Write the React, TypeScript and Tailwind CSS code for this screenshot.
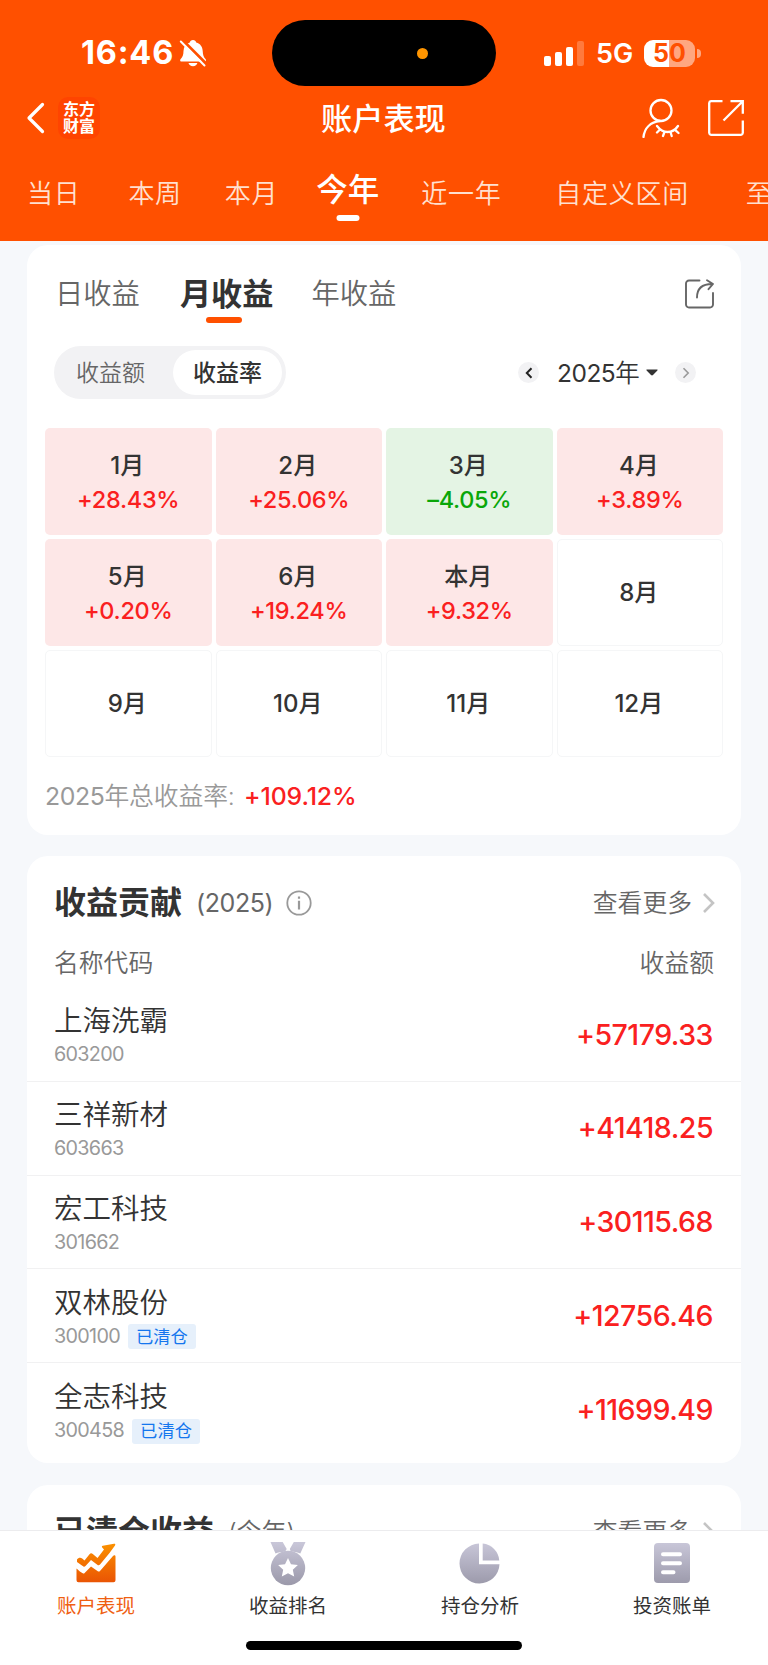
import { useState } from "react";
import clsx from "clsx";

type Month = { label: string; pct?: string };
type Stock = { name: string; code: string; amount: string; cleared?: boolean };

const RANGES = [
  { label: "当日", cls: "ml-[27px]" },
  { label: "本周", cls: "ml-[48px]" },
  { label: "本月", cls: "ml-[43px]" },
  { label: "今年", cls: "ml-[38px]" },
  { label: "近一年", cls: "ml-[42px]" },
  { label: "自定义区间", cls: "ml-[54px]" },
  { label: "至今", cls: "ml-[57px]" },
];

const MONTHS: Month[] = [
  { label: "1月", pct: "+28.43%" },
  { label: "2月", pct: "+25.06%" },
  { label: "3月", pct: "–4.05%" },
  { label: "4月", pct: "+3.89%" },
  { label: "5月", pct: "+0.20%" },
  { label: "6月", pct: "+19.24%" },
  { label: "本月", pct: "+9.32%" },
  { label: "8月" },
  { label: "9月" },
  { label: "10月" },
  { label: "11月" },
  { label: "12月" },
];

const STOCKS: Stock[] = [
  { name: "上海洗霸", code: "603200", amount: "+57179.33" },
  { name: "三祥新材", code: "603663", amount: "+41418.25" },
  { name: "宏工科技", code: "301662", amount: "+30115.68" },
  { name: "双林股份", code: "300100", amount: "+12756.46", cleared: true },
  { name: "全志科技", code: "300458", amount: "+11699.49", cleared: true },
];

function StatusBar() {
  return (
    <div className="relative flex h-[86px] items-center pt-[20px]">
      <span className="ml-[81px] w-[98px] pt-px text-[32.500px] font-bold leading-none tracking-[0.8px]">16:46</span>
      <svg className="h-[28px] w-[27px]" viewBox="0 0 27 28" fill="none">
        <path
          d="M14 1c1.800 0 2.900 1 3.200 2.400 4.200 1.200 6.300 4.300 6.500 8.600.2 4.200 1 6.200 3 8.200.6.8.3 2.300-1 2.300H2.500c-1.300 0-1.700-1.400-1-2.300 2.200-2.200 2.900-4.200 3-8.200.2-4.300 2.300-7.400 6.300-8.600C11.100 2 12.200 1 14 1Z"
          fill="#fff"
        />
        <path d="M9.500 24h8.900c-.5 2-2.100 3.200-4.400 3.200S10 26 9.500 24Z" fill="#fff" />
        <path d="M3.200.8 27.500 25" stroke="#ff5000" strokeWidth="3" />
        <path d="M1.800 2.500 25.500 26.500" stroke="#fff" strokeWidth="2" strokeLinecap="round" />
      </svg>

      {/* dynamic island */}
      <div className="absolute left-[272px] top-[20px] h-[66px] w-[224px] rounded-full bg-black">
        <div className="absolute left-[145px] top-[28px] h-[11px] w-[11px] rounded-full bg-[#ff9500]" />
      </div>

      <div className="ml-auto flex items-center pr-[67px]">
        <div className="flex h-[25px] items-end gap-[4px]">
          <div className="h-[10px] w-[7px] rounded-[2px] bg-white" />
          <div className="h-[14px] w-[7px] rounded-[2px] bg-white" />
          <div className="h-[19px] w-[7px] rounded-[2px] bg-white" />
          <div className="h-[25px] w-[7px] rounded-[2px] bg-[#ff7a3d]" />
        </div>
        <span className="ml-[12px] w-[48px] text-[27px] font-semibold leading-none">5G</span>
        <div className="flex h-[27px] w-[51px] items-center justify-center rounded-[9px] bg-[linear-gradient(90deg,#fff_50%,#ffa780_50%)] text-[25px] font-bold leading-none text-[#ff5000]">
          50
        </div>
        <div className="ml-[2px] h-[9px] w-[4px] rounded-r-full bg-[#ffa780]" />
      </div>
    </div>
  );
}

function TitleBar() {
  return (
    <div className="flex h-[64px] items-center">
      <svg className="ml-[26px] h-[32px] w-[20px]" viewBox="0 0 20 32" fill="none" stroke="#fff" strokeWidth="3.200" strokeLinecap="round" strokeLinejoin="round">
        <path d="M16.500 2.500 3 16l13.500 13.500" />
      </svg>
      <div className="ml-[12px] flex h-[42px] w-[42px] flex-col items-center justify-center rounded-[10px] bg-[#ff4400] text-[16px] font-bold leading-[17.500px]">
        <span>东方</span>
        <span>财富</span>
      </div>
      <h1 className="ml-[221px] w-[130px] pt-[3px] text-[31.200px] font-medium leading-none">账户表现</h1>
      <svg className="ml-[191px] h-[40px] w-[38px]" viewBox="0 0 38 40" fill="none" stroke="#fff" strokeWidth="2.300" strokeLinecap="round">
        <circle cx="19" cy="12.500" r="10.500" />
        <path d="M18 23C8.500 24 2.500 30 1.500 39" />
        <path d="M15 28c3.500 4.500 6.500 6 10.500 6s7.500-1.500 10.500-6M18 31.500 15 34.500M22.500 34l-1.500 4M28.500 34l1.200 4M33 31.800l3.500 3.200" />
      </svg>
      <svg className="ml-[27px] h-[38px] w-[38px]" viewBox="0 0 38 38" fill="none" stroke="#fff" strokeWidth="2.300">
        <path d="M15.500 2.200H4A2 2 0 0 0 2.200 4v30A2 2 0 0 0 4 35.800h30a2 2 0 0 0 1.800-1.800V21.500" />
        <path d="M23.500 2.200h12.300v12.600M35.500 2.500 16.500 21.500" />
      </svg>
    </div>
  );
}

function RangeTabs() {
  const [active, setActive] = useState("今年");
  return (
    <div className="flex h-[91px] items-start overflow-hidden whitespace-nowrap pt-[16px]">
      {RANGES.map(({ label, cls }) => (
        <button
          key={label}
          onClick={() => setActive(label)}
          className={clsx(
            "relative h-[60px] shrink-0",
            cls,
            active === label
              ? "pb-[13px] text-[31.500px] font-medium leading-[38px]"
              : "pb-[4px] text-[26px] font-[350] leading-[44px] tracking-[0.7px] text-[#ffe0d0]"
          )}
        >
          {label}
          {active === label && (
            <i className="absolute bottom-[5px] left-1/2 h-[6px] w-[23px] -translate-x-1/2 rounded-full bg-white" />
          )}
        </button>
      ))}
    </div>
  );
}

function MonthCell({ label, pct }: Month) {
  const down = pct?.startsWith("–");
  return (
    <div
      className={clsx(
        "flex h-[107px] flex-col items-center justify-center rounded-[5px]",
        !pct && "border border-[#f5f6f7]",
        pct && (down ? "bg-[#e4f4e4] pt-[2px]" : "bg-[#fde7e7] pt-[2px]")
      )}
    >
      <span className="pr-[2px] text-[24px] font-medium leading-[34px] text-[#333]">{label}</span>
      {pct && (
        <span className={clsx("text-[23.500px] font-medium leading-[34px] tracking-[-0.3px]", down ? "text-[#09a709]" : "text-[#fa2020]")}>
          {pct}
        </span>
      )}
    </div>
  );
}

function IncomeCard() {
  return (
    <section className="h-[590px] rounded-[21px] bg-white">
      <div className="flex h-[88px] items-start pl-[28px] pr-[26px] pt-[29px] leading-[40px]">
        <span className="text-[28.300px] font-[350] text-[#666]">日收益</span>
        <span className="relative ml-[40px] text-[31.200px] font-bold text-[#333]">
          月收益
          <i className="absolute -bottom-[9px] left-[26px] h-[6px] w-[36px] rounded-full bg-[#ff5000]" />
        </span>
        <span className="ml-[38px] text-[28.300px] font-[350] text-[#666]">年收益</span>
        <svg className="ml-auto mt-[4px] h-[31px] w-[31px]" viewBox="0 0 31 31" fill="none" stroke="#666" strokeWidth="1.900" strokeLinecap="round" strokeLinejoin="round">
          <path d="M15.500 2.500H5A3 3 0 0 0 2 5.500v21a3 3 0 0 0 3 3h21a3 3 0 0 0 3-3V15" />
          <path d="M13 19.500C13 10.500 18 6 28 6M23 2.200 29 6l-4.500 5.200" />
        </svg>
      </div>

      <div className="mt-[13px] flex h-[53px] items-center pl-[27px] pr-[45px]">
        <div className="flex h-[53px] w-[232px] items-center rounded-full bg-[#f2f2f4] p-[4px] text-[23px] leading-[40px]">
          <span className="w-[115px] pl-[18px] font-[350] text-[#666]">收益额</span>
          <span className="flex h-[45px] w-[109px] items-center justify-center rounded-full bg-white font-medium text-[#333]">收益率</span>
        </div>
        <button className="ml-auto flex h-[21px] w-[21px] items-center justify-center rounded-full bg-[#f2f2f4]">
          <svg className="h-[12px] w-[8px]" viewBox="0 0 8 12" fill="none" stroke="#222" strokeWidth="2"><path d="M6.500 1.200 1.800 6l4.700 4.800" /></svg>
        </button>
        <span className="ml-[18px] w-[89px] whitespace-nowrap text-[24.500px] font-[350] leading-[36px] tracking-[-0.5px] text-[#333]">
          <span className="font-normal">2025</span>年
        </span>
        <svg className="h-[7px] w-[12px]" viewBox="0 0 12 7" fill="#333"><path d="M1 .5h10c.6 0 .8.500.4.9L7 6c-.6.600-1.400.600-2 0L.6 1.400C.2 1 .4.500 1 .5Z" /></svg>
        <button className="ml-[17px] flex h-[21px] w-[21px] items-center justify-center rounded-full bg-[#f2f2f4]">
          <svg className="h-[12px] w-[8px]" viewBox="0 0 8 12" fill="none" stroke="#999" strokeWidth="1.600"><path d="M1.500 1.200 6.200 6l-4.700 4.800" /></svg>
        </button>
      </div>

      <div className="mt-[29px] grid grid-cols-4 gap-[4px] px-[18px]">
        {MONTHS.map((m) => (
          <MonthCell key={m.label} {...m} />
        ))}
      </div>

      <div className="mt-[19px] flex h-[40px] items-center pl-[18px] text-[24.800px] leading-[40px]">
        <span className="w-[199px] whitespace-nowrap font-[350] tracking-[-0.1px] text-[#999]">
          <span className="font-normal tracking-[-0.4px]">2025</span>年总收益率:
        </span>
        <span className="font-medium tracking-[-0.1px] text-[#fa2020]">+109.12%</span>
      </div>
    </section>
  );
}

function CardHeader({ title, note, info }: { title: string; note: string; info?: boolean }) {
  return (
    <div className="flex h-[94px] items-center pl-[27px] pr-[25px]">
      <h2 className="text-[32px] font-bold leading-[40px] text-[#333]">{title}</h2>
      <span
        className={clsx(
          "ml-[14px] text-[25px] leading-[40px] text-[#666]",
          info ? "font-normal tracking-[-0.4px]" : "font-[350] tracking-[-0.1px]"
        )}
      >
        {note}
      </span>
      {info && (
        <svg className="ml-[13px] h-[26px] w-[26px]" viewBox="0 0 26 26" fill="none" stroke="#999" strokeWidth="1.800">
          <circle cx="13" cy="13" r="11.700" />
          <path d="M13 10.800V19.500M13 6.500v2.300" strokeWidth="2.200" />
        </svg>
      )}
      <span className="ml-auto text-[24.800px] font-[350] leading-[40px] text-[#666]">查看更多</span>
      <svg className="ml-[10px] h-[20px] w-[14px]" viewBox="0 0 14 20" fill="none" stroke="#c4c4c4" strokeWidth="2.600">
        <path d="M2 1l9 9-9 9" />
      </svg>
    </div>
  );
}

function StockRow({ name, code, amount, cleared }: Stock) {
  return (
    <li className="flex h-[93.800px] items-center justify-between border-b border-[#f1f1f2] pl-[27px] pr-[28px] last:border-b-0">
      <div className="pt-[6px]">
        <div className="text-[28.500px] font-[350] leading-[36px] text-[#333]">{name}</div>
        <div className="flex h-[32px] items-center">
          <span className="text-[19.800px] leading-none tracking-[-0.7px] text-[#999]">{code}</span>
          {cleared && (
            <span className="ml-[8px] flex h-[25px] w-[68px] items-center justify-center rounded-[3px] bg-[#e6f0fb] pb-px text-[17.300px] leading-none text-[#1476ee]">
              已清仓
            </span>
          )}
        </div>
      </div>
      <span className="pt-px text-[28.500px] font-medium leading-none tracking-[-0.5px] text-[#fa2020]">{amount}</span>
    </li>
  );
}

function ContributionCard() {
  return (
    <section className="mt-[21px] h-[607px] rounded-[21px] bg-white">
      <CardHeader title="收益贡献" note="(2025)" info />
      <div className="flex h-[38px] items-center justify-between px-[27px] pb-[12px] text-[24.800px] font-[350] leading-[36px] text-[#666]">
        <span>名称代码</span>
        <span>收益额</span>
      </div>
      <ul>
        {STOCKS.map((s) => (
          <StockRow key={s.code} {...s} />
        ))}
      </ul>
    </section>
  );
}

function TabIcon({ name }: { name: string }) {
  return (
    <svg className="h-[46px] w-[44px]" viewBox="0 0 44 46">
      <defs>
        <linearGradient id="orange" gradientUnits="userSpaceOnUse" x1="0" y1="3" x2="0" y2="42">
          <stop offset="0" stopColor="#fb9200" />
          <stop offset="1" stopColor="#ea5504" />
        </linearGradient>
        <linearGradient id="grey" gradientUnits="userSpaceOnUse" x1="0" y1="2" x2="0" y2="44">
          <stop offset="0" stopColor="#c9c7d9" />
          <stop offset="1" stopColor="#9c9aab" />
        </linearGradient>
      </defs>
      {name === "chart" && (
        <g fill="url(#orange)">
          <path d="M3 19.500c1.300-2 3.500-2.500 5.200-1L10.500 20.500 15.500 14.200c1-1.200 2.200-1.200 3.300-.2L23.500 18 30 9.500 28.200 7.500c-.6-.9-.3-1.500.6-1.700L40 3.800c1.300-.2 1.600.5 1 1.600L35.500 13 26 24.500c-.8 1-1.700 1.100-2.700.3L17 20 11.500 26c-.9.900-1.900.9-2.800.1L3 22Z" />
          <path d="M2.500 28.500c2.500 2 4.300 4 6.700 5 .6.200 1 0 1.400-.5L17 26.500l6.800 4.700c.8.6 1.500.5 2.200-.2L39.200 15.800c1-.9 2.300-.6 2.300.8V40.200a2 2 0 0 1-2 2h-35a2 2 0 0 1-2-2Z" />
        </g>
      )}
      {name === "medal" && (
        <g fill="url(#grey)">
          <path d="M4.500 2h12.200l4 7-1.500 2.500C15 12 12 12.500 9.500 13.500ZM39.500 2H27.800l-4 7 1 2.500c4 .3 7 .9 9.500 2Z" />
          <circle cx="22" cy="28" r="17.200" />
          <path d="m22 18 3 6.300 6.900.8-5.100 4.700 1.400 6.800-6.200-3.400-6.200 3.400 1.400-6.800-5.100-4.700 6.900-.8Z" fill="#fff" />
        </g>
      )}
      {name === "pie" && (
        <g fill="url(#grey)">
          <path d="M21 3.500A20 20 0 1 0 41.500 24.200H21Z" />
          <path d="M24.700 3.500A18.500 18.500 0 0 1 41.300 20.500H24.700Z" />
        </g>
      )}
      {name === "bill" && (
        <g>
          <rect x="4" y="3" width="36" height="40" rx="4" fill="url(#grey)" />
          <path d="M13 14.200h17M13 23.200h17M13 32.200h10.500" stroke="#fff" strokeWidth="4" strokeLinecap="round" />
        </g>
      )}
    </svg>
  );
}

function BottomNav() {
  const items = [
    { icon: "chart", label: "账户表现" },
    { icon: "medal", label: "收益排名" },
    { icon: "pie", label: "持仓分析" },
    { icon: "bill", label: "投资账单" },
  ];
  return (
    <nav className="h-[135px] shrink-0 border-t border-[#ececee] bg-white">
      <div className="grid grid-cols-4 pt-[9px]">
        {items.map(({ icon, label }) => (
          <div key={icon} className="flex flex-col items-center">
            <TabIcon name={icon} />
            <span className={clsx("mt-[6px] text-[19.500px] leading-[28px]", icon === "chart" ? "text-[#ef5f12]" : "text-[#333]")}>{label}</span>
          </div>
        ))}
      </div>
      <div className="mx-auto mt-[21px] h-[9px] w-[276px] rounded-full bg-black" />
    </nav>
  );
}

export default function App() {
  return (
    <div className="flex h-[1665px] w-[768px] flex-col overflow-hidden bg-[#f6f8fb] font-['Inter','Noto_Sans_CJK_SC',sans-serif]">
      <header className="h-[241px] shrink-0 bg-[#ff5000] text-white">
        <StatusBar />
        <TitleBar />
        <RangeTabs />
      </header>
      <main className="min-h-0 flex-1 overflow-hidden px-[27px] pt-[4px]">
        <IncomeCard />
        <ContributionCard />
        <section className="mt-[22px] h-[200px] rounded-[21px] bg-white">
          <CardHeader title="已清仓收益" note="(今年)" />
        </section>
      </main>
      <BottomNav />
    </div>
  );
}
